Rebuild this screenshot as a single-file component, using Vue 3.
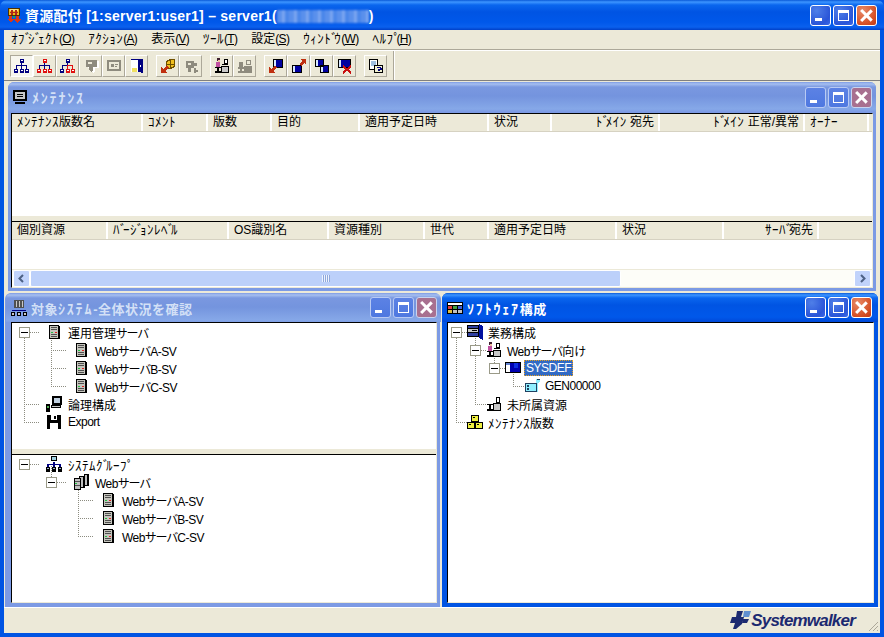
<template>
  <div class="app">
    <!-- アイコン定義 -->
    <svg class="defs" width="0" height="0">
      <symbol id="i-app" viewBox="0 0 16 16"><path fill="#f0b818" d="M2 1h12v8H2z"/><path fill="#f8e080" d="M4 2h8v2H4z"/><path fill="#b02818" d="M5 3h2v5H5zM9 3h2v5H9zM4 5h8v1H4z"/><path fill="none" stroke="#503000" d="M2.500 1.500h11v7h-11z"/><path fill="#d83818" d="M3 9h3v3h2l-3 4-4-4h2zM10 9h3v3h2l-3.500 4L8 12h2z"/><path fill="#30a040" d="M7 9h2v2H7z"/></symbol>
      <symbol id="i-tree-b" viewBox="0 0 16 16"><path fill="#000080" d="M6 1h4v4H6zM7 5h1v2H7zM2 7h11v1H2zM2 8h1v3H2zM7 8h1v3H7zM12 8h1v3h-1zM0 11h4v4H0zM6 11h4v4H6zM11 11h4v4h-4z"/><path fill="#fff" d="M7 2h2v1H7zM1 12h2v1H1zM7 12h2v1H7zM12 12h2v1h-2z"/></symbol>
      <symbol id="i-tree-t" viewBox="0 0 16 16"><path fill="#e01010" d="M6 1h4v4H6z"/><path fill="#000080" d="M7 5h1v2H7zM2 7h11v1H2zM2 8h1v3H2zM7 8h1v3H7zM12 8h1v3h-1z"/><path fill="#e01010" d="M0 11h4v4H0zM6 11h4v4H6zM11 11h4v4h-4z"/><path fill="#fff" d="M7 2h2v1H7zM1 12h2v1H1zM7 12h2v1H7zM12 12h2v1h-2z"/></symbol>
      <symbol id="i-tree-r" viewBox="0 0 16 16"><path fill="#000080" d="M6 1h4v4H6zM7 5h1v2H7zM2 7h5v1H2zM2 8h1v3H2zM0 11h4v4H0z"/><path fill="#e01010" d="M7 7h6v1H7zM7 8h1v3H7zM12 8h1v3h-1zM6 11h4v4H6zM11 11h4v4h-4z"/><path fill="#fff" d="M7 2h2v1H7zM1 12h2v1H1zM7 12h2v1H7zM12 12h2v1h-2z"/></symbol>
      <symbol id="i-gray1" viewBox="0 0 16 16"><path fill="#fff" d="M5 3h11v7h-4v3l-2 2-2-2v-3H5z"/><path fill="#8e8b7e" d="M3 2h11v7h-4v3l-2 2-2-2V9H3z"/><path fill="#ece9d8" d="M5 4h4v2H5z"/></symbol>
      <symbol id="i-gray2" viewBox="0 0 16 16"><path fill="#8e8b7e" d="M1 2h14v2H1zM1 4h2v9H1zM13 4h2v9h-2zM3 11h10v2H3zM5 6h3v3H5zM9 6h3v1H9zM9 8h2v1H9z"/></symbol>
      <symbol id="i-door" viewBox="0 0 16 16"><path fill="#fff" d="M2 1h7v13H2z"/><path fill="#f0e060" d="M3 10h5v4H3z"/><path fill="#000080" d="M9 1h5v14l-5-1zM2 1h7v1H2z"/><path fill="#fff" d="M11 7h1v2h-1z"/></symbol>
      <symbol id="i-box-arrow" viewBox="0 0 16 16"><path fill="#f0c020" d="M6 3l4-2h5v8l-4 2H6z"/><path fill="none" stroke="#705000" d="M6.500 3.500l4-2h4v7l-4 2h-4zM10.500 1.500v9M6.500 6.500h8"/><path fill="#c03010" d="M7 8l2 2-4 3 2 2H1V9l2 2z"/></symbol>
      <symbol id="i-gray3" viewBox="0 0 16 16"><path fill="#8e8b7e" d="M3 3h8v2h3v3h-3v2H8v4H5v-4H3zM11 10h2v2h2v2h-2v1h-2z"/><path fill="#ece9d8" d="M5 5h3v2H5z"/></symbol>
      <symbol id="i-person" viewBox="0 0 16 16"><path fill="#402030" d="M3 0h3v3H3z"/><path fill="#c050a0" d="M2 4h4v5H2z"/><path fill="#f0c0a0" d="M4 2h2v2H4z"/><path fill="#000" d="M1 9h6v1H1zM3 10h2v3H3zM1 13h6v2H1zM8 6h6v1H8z"/><path fill="#c8c8c8" d="M7 8h8v7H7z"/><path fill="none" stroke="#000" d="M7.500 8.500h7v6h-7z"/><path fill="#fff" d="M10 1h4v5h-4z"/><path fill="none" stroke="#000" d="M10.500 1.500h3v4h-3z"/></symbol>
      <symbol id="i-desk" viewBox="0 0 16 16"><path fill="#000" d="M1 8h6v1H1zM3 9h2v4H3zM1 13h6v2H1z"/><path fill="#c8c8c8" d="M7 7h8v8H7z"/><path fill="none" stroke="#000" d="M7.500 7.500h7v7h-7z"/><path fill="#fff" d="M10 1h4v6h-4z"/><path fill="none" stroke="#000" d="M10.500 1.500h3v5h-3z"/></symbol>
      <symbol id="i-gray4" viewBox="0 0 16 16"><path fill="#8e8b7e" d="M2 4h4v5H2zM1 9h6v2H1zM3 11h2v2H3zM1 13h6v2H1zM7 8h8v7H7zM9 2h5v5H9z"/><path fill="#ece9d8" d="M10 3h3v3h-3z"/></symbol>
      <symbol id="i-win-a" viewBox="0 0 16 16"><path fill="#0000a0" d="M5 1h10v9H5z"/><path fill="#d8e8ff" d="M5 1h3v9H5z"/><path fill="none" stroke="#000" d="M5.500 1.500h9v8h-9z"/><path fill="#c03010" d="M7 8l2 2-4 3 2 2H1V9l2 2z"/></symbol>
      <symbol id="i-win-b" viewBox="0 0 16 16"><path fill="#0000a0" d="M1 7h10v8H1z"/><path fill="#d8e8ff" d="M1 7h3v8H1z"/><path fill="none" stroke="#000" d="M1.500 7.500h9v7h-9z"/><path fill="#c03010" d="M10 1h5v5l-2-1-3 3-2-2 3-3z"/></symbol>
      <symbol id="i-win-c" viewBox="0 0 16 16"><path fill="#0000a0" d="M1 1h9v8H1zM6 7h9v8H6z"/><path fill="#d8e8ff" d="M1 1h3v8H1zM6 7h3v8H6z"/><path fill="none" stroke="#000" d="M1.500 1.500h8v7h-8zM6.500 7.500h8v7h-8z"/></symbol>
      <symbol id="i-win-x" viewBox="0 0 16 16"><path fill="#0000a0" d="M1 1h13v9H1z"/><path fill="#d8e8ff" d="M1 1h3v9H1z"/><path fill="none" stroke="#000" d="M1.500 1.500h12v8h-12z"/><path fill="none" stroke="#c81010" stroke-width="2" d="M6 8l8 7M14 8l-8 7"/></symbol>
      <symbol id="i-help" viewBox="0 0 16 16"><path fill="#fff" d="M1 1h9v11H1z"/><path fill="none" stroke="#000" d="M1.500 1.500h8v10h-8z"/><path fill="#a0c0e0" d="M3 3h5v5H3z"/><path fill="#f0f0d0" d="M6 7h9v8H6z"/><path fill="none" stroke="#000" d="M6.500 7.500h8v7h-8z"/><path fill="#000080" d="M9 9h4v1h1v2h-2v1h-2v-2h2v-1H9z"/></symbol>
      <symbol id="i-monitor" viewBox="0 0 16 16"><path fill="#000" d="M1 1h14v11H1zM3 13h10v2H3z"/><path fill="#c8c8c8" d="M3 3h10v7H3z"/><path fill="#000" d="M5 5h6v1H5zM5 7h6v1H5z"/></symbol>
      <symbol id="i-sys" viewBox="0 0 16 16"><path fill="#505050" d="M3 0h10v8H3z"/><path fill="#c8c8c8" d="M5 1h1v6H5zM8 1h1v6H8zM11 1h1v6h-1z"/><path fill="#000080" d="M1 10h14v1H1z"/><path fill="#000" d="M0 12h4v4H0zM6 12h4v4H6zM12 12h4v4h-4z"/><path fill="#c8c8c8" d="M1 13h2v2H1zM7 13h2v2H7zM13 13h2v2h-2z"/></symbol>
      <symbol id="i-soft" viewBox="0 0 16 16"><path fill="#000" d="M0 2h16v12H0z"/><path fill="#fff" d="M1 3h14v2H1z"/><path fill="#e04040" d="M1 6h4v3H1z"/><path fill="#40a040" d="M6 6h4v3H6z"/><path fill="#4060d0" d="M11 6h4v3h-4z"/><path fill="#e0c040" d="M1 10h4v3H1z"/><path fill="#c0c0c0" d="M6 10h4v3H6zM11 10h4v3h-4z"/></symbol>
      <symbol id="i-server" viewBox="0 0 16 16"><path fill="#000" d="M3 1h10v1h1v13H3z"/><path fill="#c4c4bc" d="M4 2h8v12H4z"/><path fill="#505050" d="M5 3h6v1H5zM5 5h6v1H5zM5 10h6v1H5zM5 12h6v1H5z"/><path fill="#20c040" d="M5 8h2v1H5z"/><path fill="#e02020" d="M9 8h2v1H9z"/></symbol>
      <symbol id="i-logical" viewBox="0 0 16 16"><path fill="#000" d="M6 0h10v9H6z"/><path fill="#c0d0e0" d="M8 2h6v5H8z"/><path fill="#c8c8c8" d="M5 9h10v3H5z"/><path fill="none" stroke="#000" d="M5.500 9.500h9v2h-9z"/><path fill="#000" d="M0 8h4v8H0z"/><path fill="#50b050" d="M1 10h2v2H1z"/></symbol>
      <symbol id="i-floppy" viewBox="0 0 16 16"><path fill="#000" d="M1 1h13l1 1v13H1z"/><path fill="#fff" d="M5 1h6v5H5zM4 9h8v6H4z"/><path fill="#000" d="M8 2h2v3H8z"/></symbol>
      <symbol id="i-net" viewBox="0 0 16 16"><path fill="#000" d="M5 0h6v5H5z"/><path fill="#a0d0e0" d="M6 1h4v3H6z"/><path fill="#000080" d="M7 6h2v2H7zM1 8h14v1H1zM1 9h2v2H1zM7 9h2v2H7zM13 9h2v2h-2z"/><path fill="#000" d="M0 11h4v5H0zM6 11h4v5H6zM12 11h4v5h-4z"/><path fill="#a0b0d0" d="M1 12h2v1H1zM7 12h2v1H7zM13 12h2v1h-2z"/></symbol>
      <symbol id="i-servers" viewBox="0 0 16 16"><path fill="#000" d="M11 0h5v12h-5z"/><path fill="#c0c0c0" d="M12 1h2v10h-2z"/><path fill="#000" d="M6 2h6v12H6z"/><path fill="#c0c0c0" d="M7 3h3v10H7z"/><path fill="#000" d="M1 4h7v12H1z"/><path fill="#c0c0c0" d="M2 5h5v10H2z"/><path fill="#505050" d="M2 7h5v1H2zM2 11h5v1H2z"/><path fill="#20c040" d="M2 9h2v1H2z"/></symbol>
      <symbol id="i-biz" viewBox="0 0 16 16"><path fill="#000" d="M0 1h12v12H0z"/><path fill="#c8c8c8" d="M1 5h10v3H1z"/><path fill="#000" d="M5 6h5v1H5z"/><path fill="#3040a0" d="M1 2h10v2H1zM1 9h10v3H1z"/><path fill="#0010a0" d="M12 0l4 2v14l-4-2z"/></symbol>
      <symbol id="i-sysdef" viewBox="0 0 16 16"><path fill="#000" d="M0 2h16v11H0z"/><path fill="#0000b0" d="M5 3h10v9H5z"/><path fill="#1030e0" d="M9 3h4v5H9z"/><path fill="#fff" d="M1 3h4v9H1z"/><path fill="#6080d0" d="M1 3h4v2H1z"/></symbol>
      <symbol id="i-gen" viewBox="0 0 16 16"><path fill="#90f0ff" d="M1 5h11V1h4v3l-2 1v9H1z"/><path fill="none" stroke="#204060" d="M1.500 5.500h11v8h-11z"/><path fill="#204060" d="M3 7h2v2H3zM3 10h2v2H3zM13 1h3v1h-3z"/></symbol>
      <symbol id="i-boxes" viewBox="0 0 16 16"><path fill="#000" d="M4 1h8v7H4zM0 8h8v7H0zM8 8h8v7H8z"/><path fill="#f0f040" d="M5 2h6v5H5zM1 9h6v5H1zM9 9h6v5H9z"/><path fill="#000" d="M6 3h2v1H6zM2 10h2v1H2zM10 10h2v1h-2z"/></symbol>
    </svg>

    <header class="titlebar">
      <svg class="ico"><use href="#i-app" /></svg>
      <span class="title-text">資源配付 [1:server1:user1] – server1(<span class="masked"></span>)</span>
      <div class="ctrls">
        <span class="ctl"><i class="g-min"></i></span>
        <span class="ctl"><i class="g-max"></i></span>
        <span class="ctl close"><i class="g-x"></i></span>
      </div>
    </header>

    <div class="body">
      <nav class="menubar">
        <span v-for="m in menus" :key="m.label" class="menu-item">
          <span v-for="(r, i) in runs(m.label)" :key="i" :class="r.c">{{ r.t }}</span><span class="mnemonic">(<u>{{ m.key }}</u>)</span>
        </span>
      </nav>

      <div class="toolbar">
        <div v-for="(group, gi) in toolGroups" :key="gi" class="tool-group">
          <span v-for="(t, i) in group" :key="i" class="tool" :class="{ pressed: gi === 0 && i === 0 }">
            <svg class="ico"><use :href="'#i-' + t" /></svg>
          </span>
        </div>
        <span class="tool-end"></span>
      </div>

      <main class="mdi">
        <!-- メンテナンス -->
        <section class="win win-top">
          <div class="win-title">
            <svg class="ico"><use href="#i-monitor" /></svg>
            <span class="win-name"><span v-for="(r, i) in runs('ﾒﾝﾃﾅﾝｽ')" :key="i" :class="r.c">{{ r.t }}</span></span>
            <div class="ctrls">
              <span class="ctl"><i class="g-min"></i></span>
              <span class="ctl"><i class="g-max"></i></span>
              <span class="ctl close"><i class="g-x"></i></span>
            </div>
          </div>
          <div class="client">
            <div class="head cols-a">
              <span v-for="c in colsA" :key="c.t" class="cell" :class="{ right: c.r }"><span v-for="(r, i) in runs(c.t)" :key="i" :class="r.c">{{ r.t }}</span></span>
            </div>
            <div class="list-a"></div>
            <div class="splitter"></div>
            <div class="head cols-b">
              <span v-for="c in colsB" :key="c.t" class="cell" :class="{ right: c.r }"><span v-for="(r, i) in runs(c.t)" :key="i" :class="r.c">{{ r.t }}</span></span>
            </div>
            <div class="list-b"></div>
            <div class="hscroll">
              <span class="sb-btn">
                <svg width="9" height="9" viewBox="0 0 9 9"><path fill="none" stroke="#4d6185" stroke-width="2" d="M6 1L2.500 4.500 6 8"/></svg>
              </span>
              <span class="sb-thumb"><i class="grip"></i></span>
              <span class="sb-track"></span>
              <span class="sb-btn">
                <svg width="9" height="9" viewBox="0 0 9 9"><path fill="none" stroke="#4d6185" stroke-width="2" d="M3 1l3.500 3.500L3 8"/></svg>
              </span>
            </div>
          </div>
        </section>

        <div class="bottom">
          <section v-for="w in windows" :key="w.title" class="win" :class="{ active: w.active }">
            <div class="win-title">
              <svg class="ico"><use :href="'#i-' + w.icon" /></svg>
              <span class="win-name"><span v-for="(r, i) in runs(w.title)" :key="i" :class="r.c">{{ r.t }}</span></span>
              <div class="ctrls">
                <span class="ctl"><i class="g-min"></i></span>
                <span class="ctl"><i class="g-max"></i></span>
                <span class="ctl close"><i class="g-x"></i></span>
              </div>
            </div>
            <div class="client panes">
              <div v-for="(pane, pi) in w.panes" :key="pi" class="pane" :class="{ grow: pi > 0 || w.panes.length === 1, first: w.panes.length > 1 && pi === 0 }">
                <div class="tree" :class="{ narrow: pane.step === 19 }">
                  <svg class="lines" :width="400" :height="pane.nodes.length * 18 + 4">
                    <path :d="linePath(pane)" />
                  </svg>
                  <div
                    v-for="n in pane.nodes"
                    :key="n.text"
                    class="row"
                    :style="{ paddingLeft: n.level * pane.step + 'px' }"
                  >
                    <span class="gutter"><i v-if="n.box" class="exp"></i></span>
                    <svg class="ico"><use :href="'#i-' + n.icon" /></svg>
                    <span class="label" :class="{ sel: n.sel }"><span v-for="(r, i) in runs(n.text)" :key="i" :class="r.c">{{ r.t }}</span></span>
                  </div>
                </div>
              </div>
            </div>
          </section>
        </div>
      </main>

      <footer class="statusbar">
        <svg class="logo" width="21" height="19" viewBox="0 0 21 19">
          <path fill="#1c2a70" d="M7 0h6l-2 6h3l-2 7-6 5H3l2-6H0l2-6h4z"/>
          <path fill="#5f8fd0" d="M14 0h7l-2 6h-6z"/>
          <path fill="#1c2a70" d="M13 8h6l-2 4h-5z"/>
        </svg>
        <span class="brand">Systemwalker</span>
        <svg class="resize" width="12" height="12" viewBox="0 0 12 12">
          <path fill="none" stroke="#aca899" d="M11 2l-9 9M11 6l-5 5M11 10l-1 1"/>
        </svg>
      </footer>
    </div>
  </div>
</template>

<script setup>
const menus = [
  { label: "ｵﾌﾞｼﾞｪｸﾄ", key: "O" },
  { label: "ｱｸｼｮﾝ", key: "A" },
  { label: "表示", key: "V" },
  { label: "ﾂｰﾙ", key: "T" },
  { label: "設定", key: "S" },
  { label: "ｳｨﾝﾄﾞｳ", key: "W" },
  { label: "ﾍﾙﾌﾟ", key: "H" },
];

const toolGroups = [
  ["tree-b", "tree-t", "tree-r", "gray1", "gray2", "door"],
  ["box-arrow", "gray3"],
  ["person", "gray4"],
  ["win-a", "win-b", "win-c", "win-x"],
  ["help"],
];

const colsA = [
  { t: "ﾒﾝﾃﾅﾝｽ版数名" }, { t: "ｺﾒﾝﾄ" }, { t: "版数" }, { t: "目的" }, { t: "適用予定日時" },
  { t: "状況" }, { t: "ﾄﾞﾒｲﾝ 宛先", r: true }, { t: "ﾄﾞﾒｲﾝ 正常/異常", r: true }, { t: "ｵｰﾅｰ" }, { t: "" },
];
const colsB = [
  { t: "個別資源" }, { t: "ﾊﾞｰｼﾞｮﾝﾚﾍﾞﾙ" }, { t: "OS識別名" }, { t: "資源種別" }, { t: "世代" },
  { t: "適用予定日時" }, { t: "状況" }, { t: "ｻｰﾊﾞ宛先", r: true }, { t: "" },
];

// parent は親ノードの添字
const windows = [
  {
    title: "対象ｼｽﾃﾑ-全体状況を確認",
    icon: "sys",
    active: false,
    panes: [
      {
        step: 27,
        nodes: [
          { level: 0, icon: "server", text: "運用管理サーバ", box: true, parent: -1 },
          { level: 1, icon: "server", text: "WebサーバA-SV", parent: 0 },
          { level: 1, icon: "server", text: "WebサーバB-SV", parent: 0 },
          { level: 1, icon: "server", text: "WebサーバC-SV", parent: 0 },
          { level: 0, icon: "logical", text: "論理構成", parent: 0 },
          { level: 0, icon: "floppy", text: "Export", parent: 0 },
        ],
      },
      {
        step: 27,
        nodes: [
          { level: 0, icon: "net", text: "ｼｽﾃﾑｸﾞﾙｰﾌﾟ", box: true, parent: -1 },
          { level: 1, icon: "servers", text: "Webサーバ", box: true, parent: 0 },
          { level: 2, icon: "server", text: "WebサーバA-SV", parent: 1 },
          { level: 2, icon: "server", text: "WebサーバB-SV", parent: 1 },
          { level: 2, icon: "server", text: "WebサーバC-SV", parent: 1 },
        ],
      },
    ],
  },
  {
    title: "ｿﾌﾄｳｪｱ構成",
    icon: "soft",
    active: true,
    panes: [
      {
        step: 19,
        nodes: [
          { level: 0, icon: "biz", text: "業務構成", box: true, parent: -1 },
          { level: 1, icon: "person", text: "Webサーバ向け", box: true, parent: 0 },
          { level: 2, icon: "sysdef", text: "SYSDEF", box: true, sel: true, parent: 1 },
          { level: 3, icon: "gen", text: "GEN00000", parent: 2 },
          { level: 1, icon: "desk", text: "未所属資源", parent: 0 },
          { level: 0, icon: "boxes", text: "ﾒﾝﾃﾅﾝｽ版数", parent: 0 },
        ],
      },
    ],
  },
];

// 半角カナは元の画面だと幅が広く濁点が詰まるので、字種ごとに分ける
function runs(text) {
  const parts = text.match(/[ﾞﾟ]|[ｦ-ﾝ]+|[ァ-ヶー]+|[A-Za-z0-9-]+|[^ｦ-ﾟァ-ヶーA-Za-z0-9-]+/g) || [];
  return parts.map((t) => {
    let c = "";
    if (/^[ﾞﾟ]/.test(t)) c = "dk";
    else if (/^[ｦ-ﾝ]/.test(t)) c = "hk";
    else if (/^[ァ-ヶー]/.test(t)) c = "fk";
    else if (/^[A-Za-z0-9-]/.test(t)) c = "la";
    return { t, c };
  });
}

// 点線のつなぎ線。縦線は自分のレベルの位置に引く
function linePath(pane) {
  const narrow = pane.step === 19;
  const first = narrow ? 8 : 12;
  const toIcon = narrow ? 11 : 15;
  const cx = (level) => first + level * pane.step;
  const cy = (i) => i * 18 + 9;
  let d = "";
  pane.nodes.forEach((n, i) => {
    const x = cx(n.level);
    d += `M${x} ${cy(i) + 0.5}H${x + toIcon}`;
    if (n.parent >= 0) d += `M${x + 0.5} ${cy(n.parent)}V${cy(i)}`;
  });
  return d;
}
</script>

<style>
html, body { margin: 0; padding: 0; }
</style>

<style scoped>
.app {
  width: 884px;
  height: 637px;
  display: flex;
  flex-direction: column;
  overflow: hidden;
  background: #0054e3;
  font-family: "Liberation Sans", "Noto Sans CJK JP", sans-serif;
  font-size: 12px;
  color: #000;
}
.defs { position: absolute; }
.ico {
  width: 16px;
  height: 16px;
  flex-shrink: 0;
  shape-rendering: crispEdges;
}
.hk { font-size: 13px; letter-spacing: 0.5px; }
.dk { font-size: 13px; letter-spacing: -3.500px; }

.titlebar {
  height: 30px;
  flex-shrink: 0;
  display: flex;
  align-items: center;
  padding: 0 7px 0 6px;
  gap: 3px;
  border-radius: 7px 7px 0 0;
  background: linear-gradient(#0a5ad8 0, #3d95ff 2px, #0a66ee 5px, #0054e3 12px, #0058ea 22px, #0a60ee 27px, #0040c8 30px);
}
.title-text {
  font-size: 14px;
  font-weight: 700;
  color: #fff;
  white-space: nowrap;
  letter-spacing: 0.25px;
}
.masked {
  display: inline-block;
  width: 92px;
  height: 13px;
  vertical-align: -2px;
  background: repeating-linear-gradient(90deg, #5a90ec 0 5px, #7ca6f0 5px 8px, #4a86ea 8px 12px);
  filter: blur(1px);
}
.ctrls {
  margin-left: auto;
  display: flex;
  gap: 2px;
}
.ctl {
  width: 21px;
  height: 21px;
  box-sizing: border-box;
  border: 1px solid #fff;
  border-radius: 3px;
  background: radial-gradient(circle at 30% 25%, #4f7fe8, #2a55d8 70%, #3a6ae8);
  display: flex;
  align-items: center;
  justify-content: center;
  position: relative;
}
.ctl.close { background: radial-gradient(circle at 30% 25%, #e88a68, #d44e24 70%, #c03a14); }
.g-min { width: 7px; height: 3px; background: #fff; position: absolute; left: 4px; bottom: 4px; }
.g-max { width: 11px; height: 11px; box-sizing: border-box; border: 1px solid #fff; border-top-width: 3px; }
.g-x { width: 13px; height: 13px; position: relative; }
.g-x::before, .g-x::after {
  content: "";
  position: absolute;
  left: 5px;
  top: -1px;
  width: 2.500px;
  height: 15px;
  background: #fff;
  transform: rotate(45deg);
}
.g-x::after { transform: rotate(-45deg); }

.body {
  flex: 1;
  min-height: 0;
  margin: 0 4px 4px;
  display: flex;
  flex-direction: column;
  background: #ece9d8;
}

.menubar {
  height: 20px;
  box-sizing: border-box;
  flex-shrink: 0;
  display: flex;
  align-items: center;
  padding: 0 0 4px 7px;
  gap: 14px;
  border-bottom: 1px solid #aca899;
  box-shadow: 0 1px 0 #fff;
}
.menu-item { white-space: nowrap; }
.mnemonic { letter-spacing: -0.7px; }

.toolbar {
  height: 29px;
  margin-top: 1px;
  flex-shrink: 0;
  display: flex;
  align-items: center;
  padding-left: 6px;
  gap: 8px;
}
.tool-group { display: flex; }
.tool {
  width: 23px;
  height: 22px;
  box-sizing: border-box;
  display: flex;
  align-items: center;
  justify-content: center;
  border: 1px solid;
  border-color: #fff #aca899 #aca899 #fff;
}
.tool.pressed {
  background: #f7f6ee;
  border-color: #aca899 #fff #fff #aca899;
}
.tool-end {
  width: 0;
  height: 29px;
  margin-left: -2px;
  border-left: 1px solid #aca899;
  border-right: 1px solid #fff;
}

.mdi {
  flex: 1;
  min-height: 0;
  display: flex;
  flex-direction: column;
  gap: 2px;
  padding: 1px 2px 0 1px;
  border-top: 1px solid #808080;
}

.win {
  box-sizing: border-box;
  display: flex;
  flex-direction: column;
  min-width: 0;
  padding: 0 4px 4px 5px;
  border-radius: 6px 6px 0 0;
  background: #7c9ae4;
}
.win:first-child:not(.win-top) { padding-left: 6px; padding-right: 3px; }
.win.active { background: #0054e3; }
.win-top { height: 209px; margin: 0 0 0 3px; width: 868px; padding: 0 3px 3px; flex-shrink: 0; }

.win-title {
  height: 30px;
  flex-shrink: 0;
  display: flex;
  align-items: center;
  gap: 4px;
  margin: 0 -4px 0 -5px;
  padding: 0 4px 0 5px;
  border-radius: 6px 6px 0 0;
  background: linear-gradient(#7c9ae4 0, #a6bff0 2px, #7a98e0 5px, #7494de 14px, #86a8e8 27px, #7c9ae4 30px);
  color: #d3e0f6;
}
.win-top .win-title { height: 31px; margin: 0 -3px; padding: 0 4px 1px; box-sizing: border-box; }
.win.active .win-title {
  padding-right: 6px;
  background: linear-gradient(#0a5ad8 0, #3d95ff 2px, #0a66ee 5px, #0054e3 12px, #0058ea 24px, #0048d8 29px);
  color: #fff;
}
.win-name {
  font-size: 13px;
  font-weight: 700;
  white-space: nowrap;
  letter-spacing: 0.5px;
}
.win-name .hk { font-size: 14px; letter-spacing: 1.800px; }
.win-name .dk { font-size: 14px; }
.win:not(.active) .ctl.close { background: #a87090; border-color: #c8d4f0; }
.win:not(.active) .ctl { border-color: #b8caf4; background: linear-gradient(#5c82e4, #4e78e0); }

.client {
  flex: 1;
  min-height: 0;
  display: flex;
  flex-direction: column;
  background: #ece9d8;
  border-top: 1px solid #000;
  border-left: 1px solid #000;
  border-right: 1px solid #ece9d8;
  border-bottom: 1px solid #ece9d8;
}

.head {
  height: 17px;
  flex-shrink: 0;
  display: grid;
  background: #ece9d8;
  border-bottom: 1px solid #d6d2c2;
}
.cols-a { grid-template-columns: 131px 65px 64px 88px 129px 63px 108px 145px 64px 1fr; }
.cols-b { grid-template-columns: 96px 121px 100px 96px 64px 128px 107px 95px 1fr; }
.cell {
  box-sizing: border-box;
  padding: 0 4px 0 5px;
  line-height: 16px;
  white-space: nowrap;
  overflow: hidden;
  border-right: 2px solid;
  border-image: linear-gradient(90deg, #aca899 50%, #fff 50%) 1;
}
.cell.right { text-align: right; }
.cell:last-child { border-right: 0; }
.list-a { height: 84px; background: #fff; flex-shrink: 0; }
.splitter { height: 6px; flex-shrink: 0; background: #ece9d8; border-bottom: 1px solid #000; box-sizing: border-box; }
.list-b { flex: 1; background: #fff; }

.hscroll {
  height: 17px;
  flex-shrink: 0;
  display: flex;
  padding: 0 1px;
  background: #fdfdf8;
  border-top: 1px solid #ece9d8;
}
.sb-btn {
  width: 17px;
  flex-shrink: 0;
  box-sizing: border-box;
  display: flex;
  align-items: center;
  justify-content: center;
  border: 1px solid #fff;
  border-radius: 2px;
  background: #c1d3fb;
}
.sb-thumb {
  width: 591px;
  flex-shrink: 0;
  box-sizing: border-box;
  display: flex;
  align-items: center;
  justify-content: center;
  border: 1px solid #fff;
  border-radius: 2px;
  background: #bcd0fa;
}
.grip {
  width: 8px;
  height: 7px;
  background: repeating-linear-gradient(90deg, #eef3fe 0 1px, #8fa8dc 1px 2px);
}
.sb-track { flex: 1; }

.bottom {
  flex: 1;
  min-height: 0;
  display: grid;
  grid-template-columns: 435px 436px;
  gap: 2px;
}
.bottom .win-title { height: 29px; }

.panes { background: #ece9d8; }
.pane {
  background: #fff;
  min-height: 0;
}
.pane.first {
  height: 126px;
  flex-shrink: 0;
  border-bottom: 5px solid #ece9d8;
  box-shadow: 0 1px 0 #000;
}
.pane.grow { flex: 1; }
.pane.grow:not(:first-child) { border-top: 1px solid #000; }

.tree {
  position: relative;
  padding-left: 7px;
}
.tree.narrow { padding-left: 3px; }
.lines {
  position: absolute;
  left: 0;
  top: 0;
  pointer-events: none;
}
.lines path {
  fill: none;
  stroke: #8c8c80;
  stroke-dasharray: 1 1;
}
.row {
  position: relative;
  height: 18px;
  display: flex;
  align-items: center;
  white-space: nowrap;
  font-feature-settings: "palt";
}
.row .hk, .row .dk { font-feature-settings: normal; }
.row .la { letter-spacing: -0.5px; }
.row .fk { letter-spacing: -0.7px; }
.gutter {
  width: 27px;
  flex-shrink: 0;
  height: 18px;
  display: flex;
  align-items: center;
}
.tree.narrow .gutter { width: 16px; }
.exp {
  width: 11px;
  height: 11px;
  box-sizing: border-box;
  border: 1px solid #9a9a88;
  background: linear-gradient(#000, #000) center / 7px 1px no-repeat #fff;
}
.label { margin-left: 6px; }
.tree.narrow .label { margin-left: 5px; }
.tree .label.sel {
  background: #316ac5;
  color: #fff;
  padding: 1px 2px;
  margin-left: 3px;
  outline: 1px dotted #e8a020;
  outline-offset: -1px;
}

.statusbar {
  height: 25px;
  flex-shrink: 0;
  display: flex;
  align-items: center;
  justify-content: flex-end;
  padding-right: 25px;
  position: relative;
  border-top: 1px solid #fff;
}
.logo { flex-shrink: 0; }
.brand {
  font-size: 17px;
  font-weight: 700;
  font-style: italic;
  color: #1c2a70;
  letter-spacing: -0.8px;
}
.resize {
  position: absolute;
  right: 1px;
  bottom: 1px;
}
</style>
